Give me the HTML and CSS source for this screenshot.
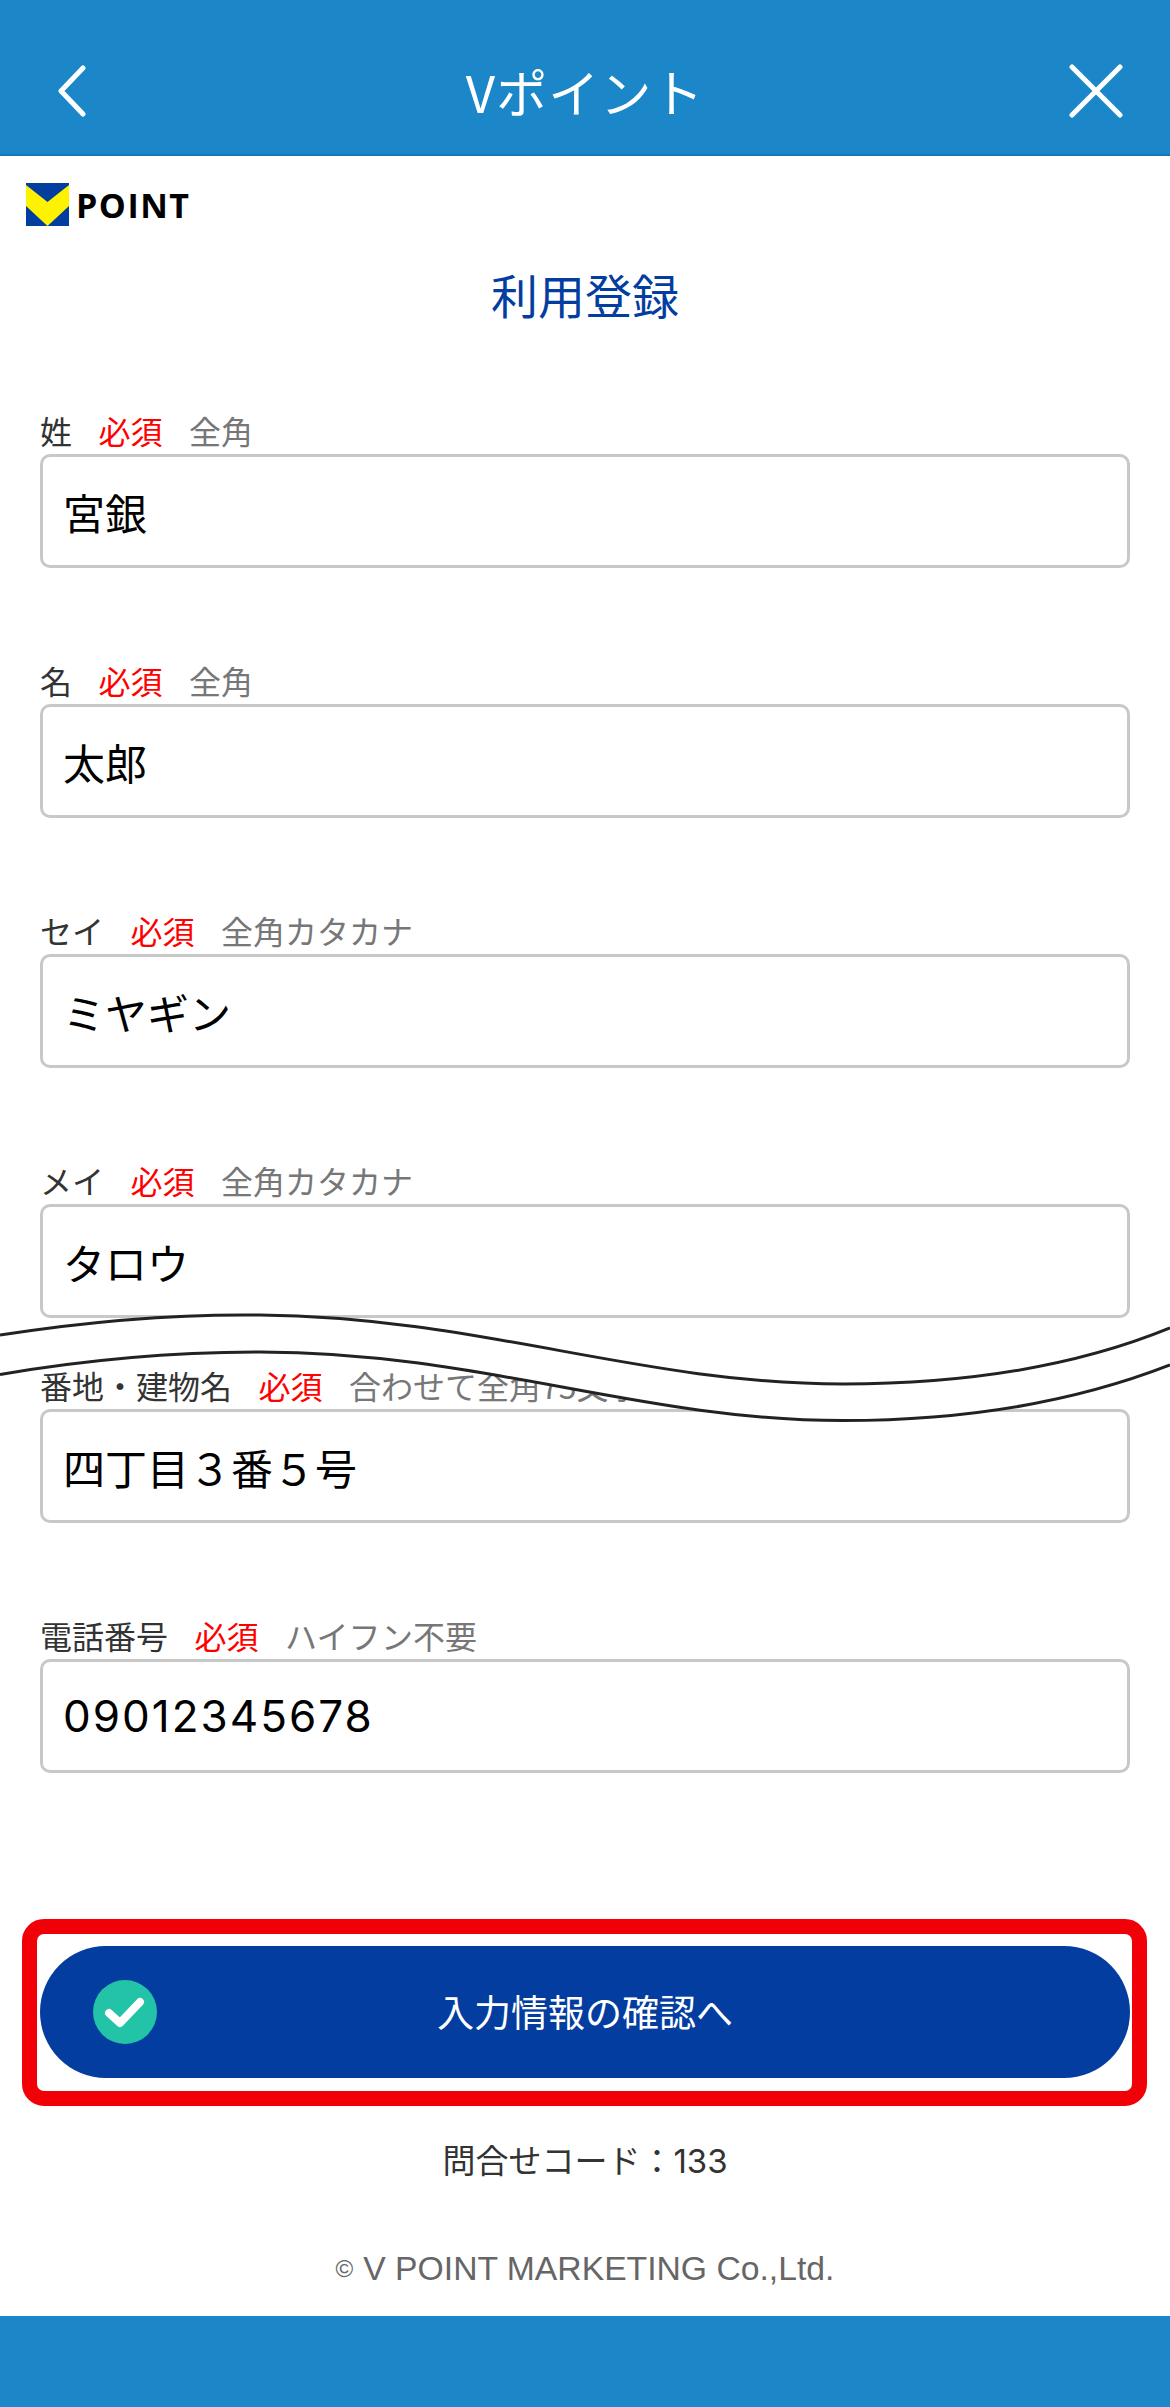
FILE: index.html
```html
<!DOCTYPE html>
<html lang="ja">
<head>
    <meta charset="utf-8">
    <title>Vポイント 利用登録</title>
    <link rel="stylesheet" href="styles.css">
</head>
<body>
    <div class="page">
        <div class="header">
            <svg class="icon-back" viewBox="0 0 29 52"><path d="M26 3 L4 26 L26 49"/></svg>
            <h1>Vポイント</h1>
            <svg class="icon-close" viewBox="0 0 54 54"><path d="M3 3 L51 51 M51 3 L3 51"/></svg>
        </div>

        <div class="logo">
            <svg class="logo-mark" viewBox="0 0 43 43">
                <rect width="43" height="43" fill="#033d9f"/>
                <polygon points="0,2 21.5,19 43,2 43,23 21.5,43 0,23" fill="#fff200"/>
            </svg>
            <span class="logo-text">POINT</span>
        </div>

        <h2 class="title">利用登録</h2>

        <div class="form">
            <div class="field">
                <div class="label">姓<span class="req">必須</span><span class="note">全角</span></div>
                <input type="text" value="宮銀">
            </div>
            <div class="field">
                <div class="label">名<span class="req">必須</span><span class="note">全角</span></div>
                <input type="text" value="太郎">
            </div>
            <div class="field">
                <div class="label">セイ<span class="req">必須</span><span class="note">全角カタカナ</span></div>
                <input type="text" value="ミヤギン">
            </div>
            <div class="field">
                <div class="label">メイ<span class="req">必須</span><span class="note">全角カタカナ</span></div>
                <input type="text" value="タロウ">
            </div>
            <div class="field">
                <div class="label">番地・建物名<span class="req">必須</span><span class="note">合わせて全角75文字</span></div>
                <input type="text" value="四丁目３番５号">
            </div>
            <div class="field">
                <div class="label">電話番号<span class="req">必須</span><span class="note">ハイフン不要</span></div>
                <input type="text" class="tel" value="09012345678">
            </div>

            <!-- 省略を示す波線 -->
            <svg class="wave" viewBox="0 0 1170 130">
                <path class="wave-fill" d="M0 36 C90 22 180 15 260 16 C480 18 640 85 843 85 C960 85 1070 70 1170 29 L1170 66 C1070 105 960 121.6 843 121.6 C640 121.6 480 53 260 53 C180 53 90 60 0 75.5 Z"/>
                <path class="wave-line" d="M0 36 C90 22 180 15 260 16 C480 18 640 85 843 85 C960 85 1070 70 1170 29"/>
                <path class="wave-line" d="M0 75.5 C90 60 180 53 260 53 C480 53 640 121.6 843 121.6 C960 121.6 1070 105 1170 66"/>
            </svg>
        </div>

        <div class="highlight">
            <button class="btn-confirm">
                <svg class="icon-check" viewBox="0 0 64 64">
                    <circle cx="32" cy="32" r="32" fill="#22c3a6"/>
                    <path d="M16 33 L27 43 L47 22"/>
                </svg>
                入力情報の確認へ
            </button>
        </div>

        <div class="code">問合せコード：133</div>
        <div class="copyright"><span class="copy-mark">©</span>V POINT MARKETING Co.,Ltd.</div>
        <div class="footer"></div>
    </div>
</body>
</html>
```

FILE: styles.css
```css
* {
    box-sizing: border-box;
}

body {
    margin: 0;
    background: white;
    font-family: "Noto Sans CJK JP", "Liberation Sans", sans-serif;
    color: #333;
}

.page {
    position: relative;
    height: 2407px;
    overflow: hidden;
}

.header {
    height: 156px;
    background: #1b87c9;
    border-bottom: 2px solid #1577b3;
    display: grid;
    grid-template-columns: 1fr auto 1fr;
    align-items: center;
    padding: 28px 47px 0;
}

.header h1 {
    margin: 0;
    font-size: 51px;
    font-weight: 400;
    line-height: 60px;
    letter-spacing: 1px;
    color: white;
}

.icon-back {
    width: 29px;
    height: 52px;
    margin-left: 10px;
}

.icon-close {
    width: 54px;
    height: 54px;
    justify-self: end;
}

.icon-back path,
.icon-close path {
    fill: none;
    stroke: white;
    stroke-width: 5;
    stroke-linecap: round;
    stroke-linejoin: round;
}

.logo {
    display: flex;
    align-items: center;
    gap: 7px;
    height: 43px;
    margin: 27px 0 0 26px;
}

.logo-mark {
    width: 43px;
    height: 43px;
}

.logo-text {
    font-family: "Open Sans", sans-serif;
    font-size: 34px;
    font-weight: 700;
    letter-spacing: 1.5px;
    color: black;
}

.title {
    margin: 39px 0 0;
    font-size: 47px;
    font-weight: 400;
    line-height: 58px;
    text-align: center;
    color: #033d9f;
}

.form {
    position: relative;
    margin-top: 88px;
    padding: 0 40px;
}

.field {
    margin-bottom: 93px;
}

.field:nth-child(4) {
    margin-bottom: 48px;
}

.field:nth-child(6) {
    margin-bottom: 146px;
}

.label {
    height: 43px;
    font-size: 32px;
    line-height: 38px;
    white-space: nowrap;
}

.req {
    margin-left: 26.5px;
    color: #f00;
}

.note {
    margin-left: 26.5px;
    color: #777;
}

input {
    display: block;
    width: 100%;
    height: 114px;
    padding: 0 20px;
    border: 3px solid #c8c8c8;
    border-radius: 10px;
    background: white;
    font-family: "Noto Sans CJK JP", "Liberation Sans", sans-serif;
    font-size: 42px;
    color: black;
}

.tel {
    font-family: "Inter", sans-serif;
    font-size: 44px;
    letter-spacing: 2px;
}

.wave {
    position: absolute;
    left: 0;
    top: 888px;
    width: 1170px;
    height: 130px;
    overflow: visible;
}

.wave-fill {
    fill: white;
}

.wave-line {
    fill: none;
    stroke: #222;
    stroke-width: 3;
}

.highlight {
    height: 187px;
    margin: 0 23px 0 22px;
    padding: 12px 2px 13px 3px;
    border: 15px solid #f20008;
    border-radius: 22px;
}

.btn-confirm {
    position: relative;
    display: block;
    width: 100%;
    height: 132px;
    border: none;
    border-radius: 66px;
    background: #033d9f;
    color: white;
    font-family: "Noto Sans CJK JP", "Liberation Sans", sans-serif;
    font-size: 37px;
    padding-bottom: 3px;
}

.icon-check {
    position: absolute;
    left: 53px;
    top: 34px;
    width: 64px;
    height: 64px;
}

.icon-check path {
    fill: none;
    stroke: white;
    stroke-width: 8;
    stroke-linecap: round;
    stroke-linejoin: round;
}

.code {
    margin-top: 35px;
    font-family: "Inter", "Noto Sans CJK JP", sans-serif;
    font-size: 33px;
    line-height: 40px;
    text-align: center;
    color: #333;
}

.copyright {
    margin-top: 67px;
    font-family: "Liberation Sans", sans-serif;
    font-size: 33.7px;
    line-height: 40px;
    text-align: center;
    color: #666;
}

.copy-mark {
    margin-right: 10px;
    font-size: 24px;
    vertical-align: 3px;
}

.footer {
    position: absolute;
    left: 0;
    right: 0;
    bottom: 0;
    height: 91px;
    background: #1b87c9;
}
```
